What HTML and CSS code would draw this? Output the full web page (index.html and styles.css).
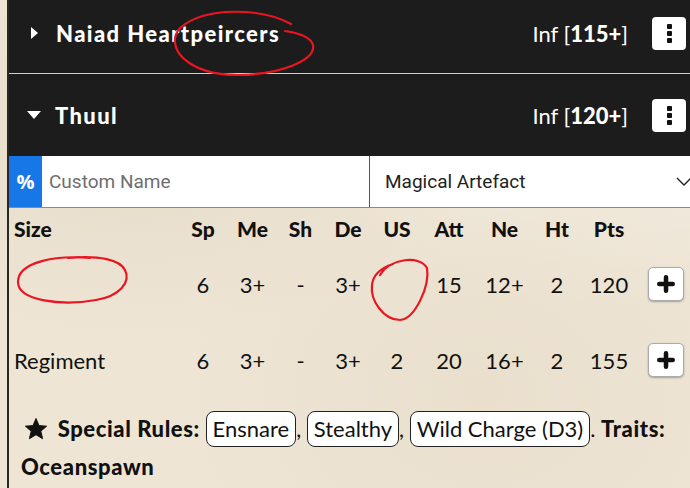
FILE: index.html
```html
<!DOCTYPE html>
<html>
<head>
<meta charset="utf-8">
<link rel="stylesheet" href="styles.css">
</head>
<body>
<div class="page">
  <div class="unit-header first">
    <span class="caret right"></span>
    <span class="unit-name">Naiad Heartpeircers</span>
    <span class="unit-type">Inf [<b>115+</b>]</span>
    <button class="menu-btn"><span></span><span></span><span></span></button>
  </div>
  <div class="unit-header second">
    <span class="caret down"></span>
    <span class="unit-name">Thuul</span>
    <span class="unit-type">Inf [<b>120+</b>]</span>
    <button class="menu-btn"><span></span><span></span><span></span></button>
  </div>
  <div class="inputs">
    <span class="pct">%</span>
    <span class="name-input">Custom Name</span>
    <span class="select">Magical Artefact
      <svg class="chev" viewBox="0 0 16 10" width="16" height="10"><path d="M1 1 L8 8 L15 1" fill="none" stroke="#222" stroke-width="1.4"/></svg>
    </span>
  </div>
  <div class="stats">
    <div class="row head">
      <span class="nm">Size</span><span>Sp</span><span>Me</span><span>Sh</span><span>De</span><span>US</span><span>Att</span><span>Ne</span><span>Ht</span><span>Pts</span><span></span>
    </div>
    <div class="row">
      <span class="nm"></span><span>6</span><span>3+</span><span>-</span><span>3+</span><span></span><span>15</span><span>12+</span><span>2</span><span>120</span>
      <span class="btn-cell"><button class="plus-btn"><svg viewBox="0 0 20 20" width="18" height="18"><path d="M10 2.5 V17.5 M2.5 10 H17.5" stroke="#111" stroke-width="5" stroke-linecap="round"/></svg></button></span>
    </div>
    <div class="row">
      <span class="nm">Regiment</span><span>6</span><span>3+</span><span>-</span><span>3+</span><span>2</span><span>20</span><span>16+</span><span>2</span><span>155</span>
      <span class="btn-cell"><button class="plus-btn"><svg viewBox="0 0 20 20" width="18" height="18"><path d="M10 2.5 V17.5 M2.5 10 H17.5" stroke="#111" stroke-width="5" stroke-linecap="round"/></svg></button></span>
    </div>
  </div>
  <p class="rules">
    <svg class="star" viewBox="0 0 24 24" width="24" height="24"><path d="M12 1.5 L15 8.6 L22.6 9.2 L16.8 14.2 L18.6 21.7 L12 17.7 L5.4 21.7 L7.2 14.2 L1.4 9.2 L9 8.6 Z" fill="#111" stroke="#111" stroke-width="1" stroke-linejoin="round"/></svg>
    <b>Special Rules:</b> <span class="tag">Ensnare</span>, <span class="tag">Stealthy</span>, <span class="tag">Wild Charge (D3)</span>. <b>Traits:</b> <b>Oceanspawn</b>
  </p>
</div>
<svg class="marks" viewBox="0 0 690 488" width="690" height="488">
  <path d="M291 24 C262 8 205 6 180 28 C164 46 186 76 240 75 C282 74 316 60 313 45 C311 38 300 33 285 31" />
  <path d="M90 258 C55 255 18 262 18 282 C18 301 62 306 96 300 C120 296 131 282 125 270 C120 260 100 255 68 258" />
  <path d="M380 275 C390 258 420 255 427 268 C430 286 415 319 400 320 C384 320 370 301 372 285 C373 275 381 268 393 264" />
</svg>
</body>
</html>
```
FILE: styles.css
```css
html, body {
  margin: 0;
  padding: 0;
}
body {
  width: 690px;
  height: 488px;
  overflow: hidden;
  position: relative;
  font-family: Lato, "Liberation Sans", sans-serif;
  color: #111;
  background-color: #eee5d5;
  background-image:
    radial-gradient(ellipse at 20% 30%, rgba(200,180,150,0.18), transparent 40%),
    radial-gradient(ellipse at 70% 80%, rgba(210,190,160,0.15), transparent 45%),
    radial-gradient(ellipse at 90% 20%, rgba(255,255,255,0.25), transparent 40%);
}
.page {
  margin-left: 7px;
  border-left: 2px solid #2a2622;
  min-height: 488px;
}
.unit-header {
  background: #1c1c1c;
  color: #fff;
  display: flex;
  align-items: center;
  padding: 0 4px 0 20px;
}
.unit-header.first {
  height: 66px;
  padding-bottom: 7px;
  border-bottom: 1px solid #cfcfcf;
}
.unit-header.second {
  height: 82px;
}
.caret {
  width: 0;
  height: 0;
}
.caret.right {
  border-top: 6px solid transparent;
  border-bottom: 6px solid transparent;
  border-left: 7px solid #fff;
  margin-left: 2px;
  margin-right: 18px;
}
.caret.down {
  border-left: 7px solid transparent;
  border-right: 7px solid transparent;
  border-top: 8px solid #fff;
  margin-left: -2px;
  margin-right: 14px;
}
.unit-name {
  font-weight: 900;
  font-size: 22px;
  letter-spacing: 1.4px;
  flex: 1;
}
.unit-type {
  font-size: 22px;
  margin-right: 24px;
}
.unit-type b {
  font-weight: 900;
}
.menu-btn {
  width: 34px;
  height: 33px;
  background: #fff;
  border: none;
  border-radius: 4px;
  display: flex;
  flex-direction: column;
  align-items: center;
  justify-content: center;
  gap: 2px;
  padding: 0;
}
.menu-btn span {
  width: 5px;
  height: 5px;
  border-radius: 1px;
  background: #111;
}
.inputs {
  display: flex;
  height: 51px;
  background: #fff;
  border-bottom: 1px solid #8a8a8a;
  font-family: Roboto, sans-serif;
  font-size: 19px;
}
.pct {
  width: 33px;
  background: #1877e6;
  color: #fff;
  font-weight: 700;
  font-size: 20px;
  display: flex;
  align-items: center;
  justify-content: center;
  font-family: "Open Sans", sans-serif;
}
.name-input {
  width: 320px;
  padding-left: 7px;
  color: #6e6e6e;
  display: flex;
  align-items: center;
  border-right: 1px solid #555;
}
.select {
  flex: 1;
  display: flex;
  align-items: center;
  padding-left: 15px;
  color: #222;
}
.chev {
  margin-left: auto;
  transform: translateX(2px);
}
.stats {
  padding-top: 2px;
}
.row {
  display: grid;
  grid-template-columns: 169px 50px 49px 47px 48px 50px 54px 57px 48px 56px 1fr;
  align-items: center;
  height: 76px;
  font-size: 22px;
  text-align: center;
}
.row.head {
  height: 36px;
  font-weight: 900;
  font-size: 21px;
}
.row .nm {
  text-align: left;
  padding-left: 5px;
}
.btn-cell {
  display: flex;
  justify-content: flex-end;
  padding-right: 6px;
}
.plus-btn {
  width: 36px;
  height: 34px;
  background: #fff;
  border: 1px solid #aaa;
  border-radius: 5px;
  box-shadow: 0 1px 2px rgba(0,0,0,0.3);
  display: flex;
  align-items: center;
  justify-content: center;
  padding: 0;
}
.rules {
  margin: 12px 0 0 0;
  padding: 0 6px 0 12px;
  font-size: 22px;
  line-height: 38px;
}
.rules b {
  font-weight: 900;
  letter-spacing: 0.6px;
}
.star {
  vertical-align: -4px;
  margin: 0 4px 0 3px;
}
.tag {
  display: inline-block;
  border: 1.5px solid #222;
  border-radius: 8px;
  background: #fff;
  padding: 0 6px;
  line-height: 34px;
}
.marks {
  position: absolute;
  left: 0;
  top: 0;
  pointer-events: none;
}
.marks path {
  fill: none;
  stroke: #ea1520;
  stroke-width: 2.2;
  stroke-linecap: round;
}
```
